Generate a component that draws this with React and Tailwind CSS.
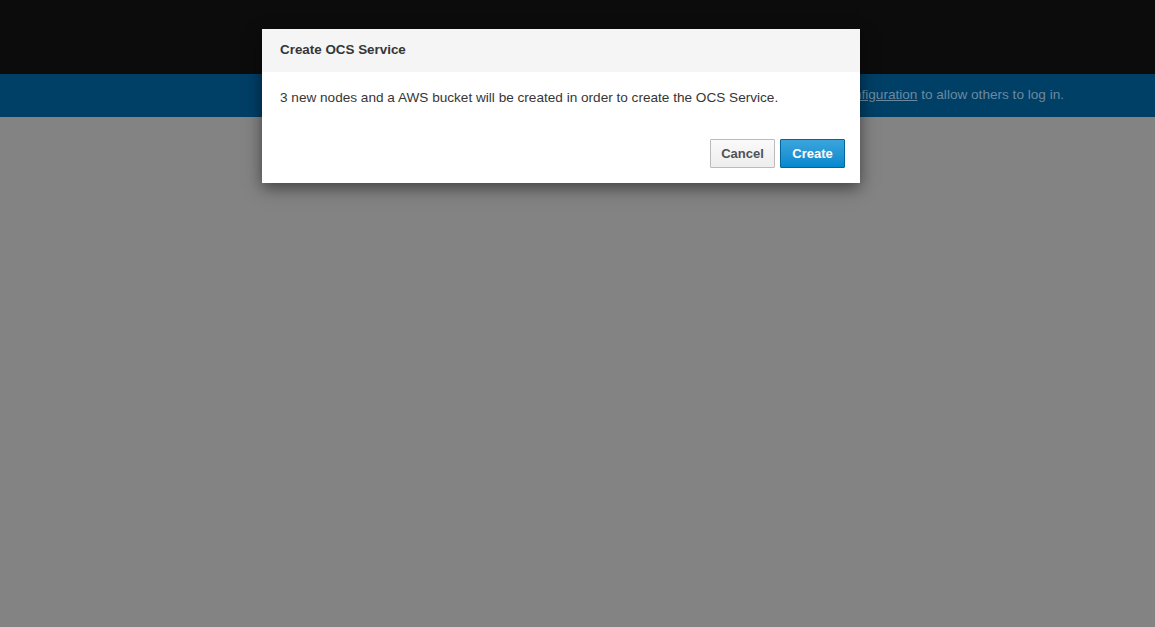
export default function App() {
  return (
    <div className="relative h-[627px] w-[1155px] overflow-hidden bg-[#838383] font-['Liberation_Sans',sans-serif]">
      {/* page underneath, already dimmed by the backdrop */}
      <div className="h-[74px] bg-[#0c0c0c]" />
      <div className="flex h-[43px] items-center justify-end bg-[#003f66] pr-[91px] text-[13.6px] text-[#6a8aa0]">
        <span className="whitespace-nowrap">
          Update the cluster OAuth <span className="underline">configuration</span> to allow others to log in.
        </span>
      </div>

      {/* modal */}
      <div className="absolute inset-0">
        <div className="ml-[262px] mt-[29px] w-[598px] bg-white shadow-[0_5px_15px_rgba(0,0,0,0.5)]">
          <div className="flex h-[43px] items-center bg-[#f5f5f5] px-[18px]">
            <h4 className="text-[13.4px] font-bold text-[#363636]">Create OCS Service</h4>
          </div>
          <div className="px-[18px] pt-[16px] text-[13.6px] text-[#363636]">
            3 new nodes and a AWS bucket will be created in order to create the OCS Service.
          </div>
          <div className="flex justify-end gap-[5px] px-[15px] pb-[15px] pt-[31px]">
            <button className="h-[29px] w-[65px] rounded-[1px] border border-[#bbbbbb] bg-gradient-to-b from-[#fafafa] to-[#ededed] text-[13px] font-bold text-[#4d5258]">
              Cancel
            </button>
            <button className="h-[29px] w-[65px] rounded-[1px] border border-[#00659c] bg-gradient-to-b from-[#39a5dc] to-[#0088ce] text-[13px] font-bold text-white">
              Create
            </button>
          </div>
        </div>
      </div>
    </div>
  );
}
